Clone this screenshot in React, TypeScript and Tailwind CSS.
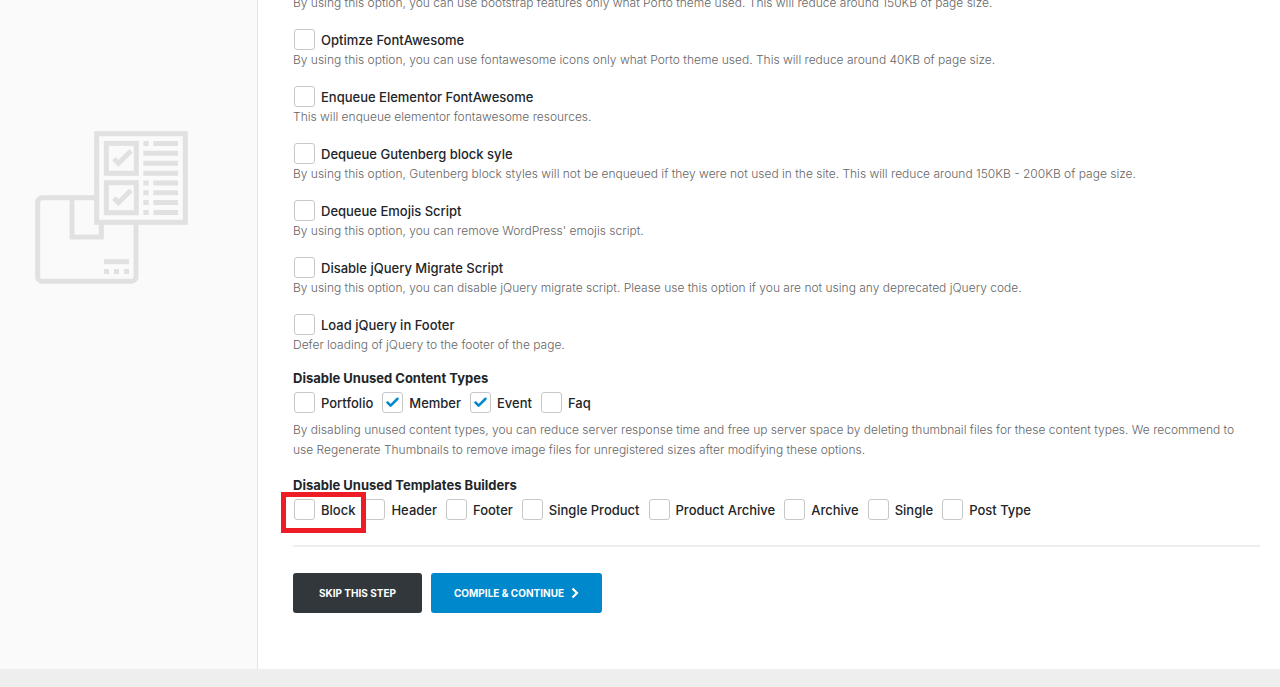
import React from 'react';
import { Check } from 'lucide-react';

interface Option {
  id: string;
  label: string;
  description: string;
}

interface Toggle {
  id: string;
  label: string;
  checked?: boolean;
  highlighted?: boolean;
}

const options: Option[] = [
  {
    id: 'optimize_fontawesome',
    label: 'Optimze FontAwesome',
    description:
      'By using this option, you can use fontawesome icons only what Porto theme used. This will reduce around 40KB of page size.',
  },
  {
    id: 'elementor_fontawesome',
    label: 'Enqueue Elementor FontAwesome',
    description: 'This will enqueue elementor fontawesome resources.',
  },
  {
    id: 'gutenberg_style',
    label: 'Dequeue Gutenberg block syle',
    description:
      'By using this option, Gutenberg block styles will not be enqueued if they were not used in the site. This will reduce around 150KB - 200KB of page size.',
  },
  {
    id: 'emojis_script',
    label: 'Dequeue Emojis Script',
    description: "By using this option, you can remove WordPress' emojis script.",
  },
  {
    id: 'jquery_migrate',
    label: 'Disable jQuery Migrate Script',
    description:
      'By using this option, you can disable jQuery migrate script. Please use this option if you are not using any deprecated jQuery code.',
  },
  {
    id: 'jquery_footer',
    label: 'Load jQuery in Footer',
    description: 'Defer loading of jQuery to the footer of the page.',
  },
];

const contentTypes: Toggle[] = [
  { id: 'portfolio', label: 'Portfolio' },
  { id: 'member', label: 'Member', checked: true },
  { id: 'event', label: 'Event', checked: true },
  { id: 'faq', label: 'Faq' },
];

const builders: Toggle[] = [
  { id: 'block', label: 'Block', highlighted: true },
  { id: 'header', label: 'Header' },
  { id: 'footer', label: 'Footer' },
  { id: 'single_product', label: 'Single Product' },
  { id: 'product_archive', label: 'Product Archive' },
  { id: 'archive', label: 'Archive' },
  { id: 'single', label: 'Single' },
  { id: 'post_type', label: 'Post Type' },
];

const Checkbox: React.FC<Toggle> = ({ id, label, checked, highlighted }) => (
  <div className="relative flex h-[22px] items-start">
    <span className="ml-px grid place-items-center">
      <input
        id={id}
        type="checkbox"
        defaultChecked={checked}
        className="peer col-start-1 row-start-1 h-[21px] w-[21px] appearance-none rounded-[3px] border border-[#c8c8c8] bg-white"
      />
      <Check
        className="pointer-events-none col-start-1 row-start-1 hidden h-[15px] w-[15px] text-[#0088cc] peer-checked:block"
        strokeWidth={4}
      />
    </span>
    <label
      htmlFor={id}
      className="pl-[6px] text-[13px] leading-[22px] font-medium whitespace-nowrap text-[#222529]"
    >
      {label}
    </label>
    {highlighted && (
      <span className="pointer-events-none absolute -top-[7px] -right-[11px] -bottom-[12px] -left-[12px] z-10 border-5 border-[#ee1c25]" />
    )}
  </div>
);

const PackageIcon: React.FC = () => (
  <svg viewBox="45 33 459 459" className="h-[153px] w-[153px]" fill="none" stroke="#e1e1e1" strokeWidth="15">
    <path d="M223 233H67a14 14 0 0 0-14 14V470a14 14 0 0 0 14 14H334a14 14 0 0 0 14-14V307" />
    <path d="M156 233V351H244V307" />
    <path d="M252 425H327" />
    <path d="M252 454.500H327" strokeDasharray="15 15" />
    <rect x="230" y="41" width="266" height="266" />
    <rect x="259" y="70" width="90" height="90" />
    <rect x="259" y="188" width="90" height="90" />
    <path d="M282 116 295 130 333 93" />
    <path d="M282 234 295 248 333 211" />
    <path d="M370 70.500H386M400 70.500H474M370 100H474M370 130H474M370 159.500H474" />
    <path d="M370 189H386M400 189H474M370 218H386M400 218H474M370 247.500H386M400 247.500H474M370 277.500H386M400 277.500H474" />
  </svg>
);

export default function App() {
  return (
    <div className="min-h-screen overflow-hidden bg-[#eeeeee] font-['Inter','Open_Sans',sans-serif] text-[12px] font-light text-[#666666]">
      <div className="flex bg-white">
        <aside className="w-[258px] shrink-0 border-r border-[#e5e5e5] bg-[#fafafa] pt-[131px] pl-[35px]">
          <PackageIcon />
        </aside>

        <main className="min-w-0 flex-1 pr-5 pb-14 pl-[35px]">
          <form onSubmit={(e) => e.preventDefault()}>
            {/* Optimization options */}
            <div className="-mt-[6px] flex flex-col gap-[17px] leading-[18px]">
              <p>
                By using this option, you can use bootstrap features only what Porto theme used. This will
                reduce around 150KB of page size.
              </p>
              {options.map((option) => (
                <div key={option.id}>
                  <Checkbox id={option.id} label={option.label} />
                  <p>{option.description}</p>
                </div>
              ))}
            </div>

            {/* Content types */}
            <h4 className="mt-[14px] text-[13px] leading-5 font-bold text-[#222529]">
              Disable Unused Content Types
            </h4>
            <div className="mt-1 flex flex-wrap gap-x-2">
              {contentTypes.map((item) => (
                <Checkbox key={item.id} {...item} />
              ))}
            </div>
            <p className="mt-[6px] pr-4 leading-5">
              By disabling unused content types, you can reduce server response time and free up server space
              by deleting thumbnail files for these content types. We recommend to use Regenerate Thumbnails
              to remove image files for unregistered sizes after modifying these options.
            </p>

            {/* Template builders */}
            <h4 className="mt-[15px] text-[13px] leading-5 font-bold text-[#222529]">
              Disable Unused Templates Builders
            </h4>
            <div className="mt-1 flex flex-wrap gap-x-2">
              {builders.map((item) => (
                <Checkbox key={item.id} {...item} />
              ))}
            </div>

            <hr className="mt-6 border-t-2 border-[#eeeeee]" />

            <div className="mt-[26px] flex gap-[9px] text-[10px] font-bold text-white">
              <button type="button" className="h-10 w-[129px] rounded-[3px] bg-[#32373c]">
                SKIP THIS STEP
              </button>
              <button
                type="submit"
                className="flex h-10 w-[171px] items-center justify-center gap-[7px] rounded-[3px] bg-[#0088cc]"
              >
                COMPILE &amp; CONTINUE
                <svg viewBox="0 0 8 12" className="h-3 w-2" fill="none" stroke="currentColor" strokeWidth="2.200">
                  <path d="M1.500 1.500 6 6 1.500 10.500" />
                </svg>
              </button>
            </div>
          </form>
        </main>
      </div>
    </div>
  );
}
